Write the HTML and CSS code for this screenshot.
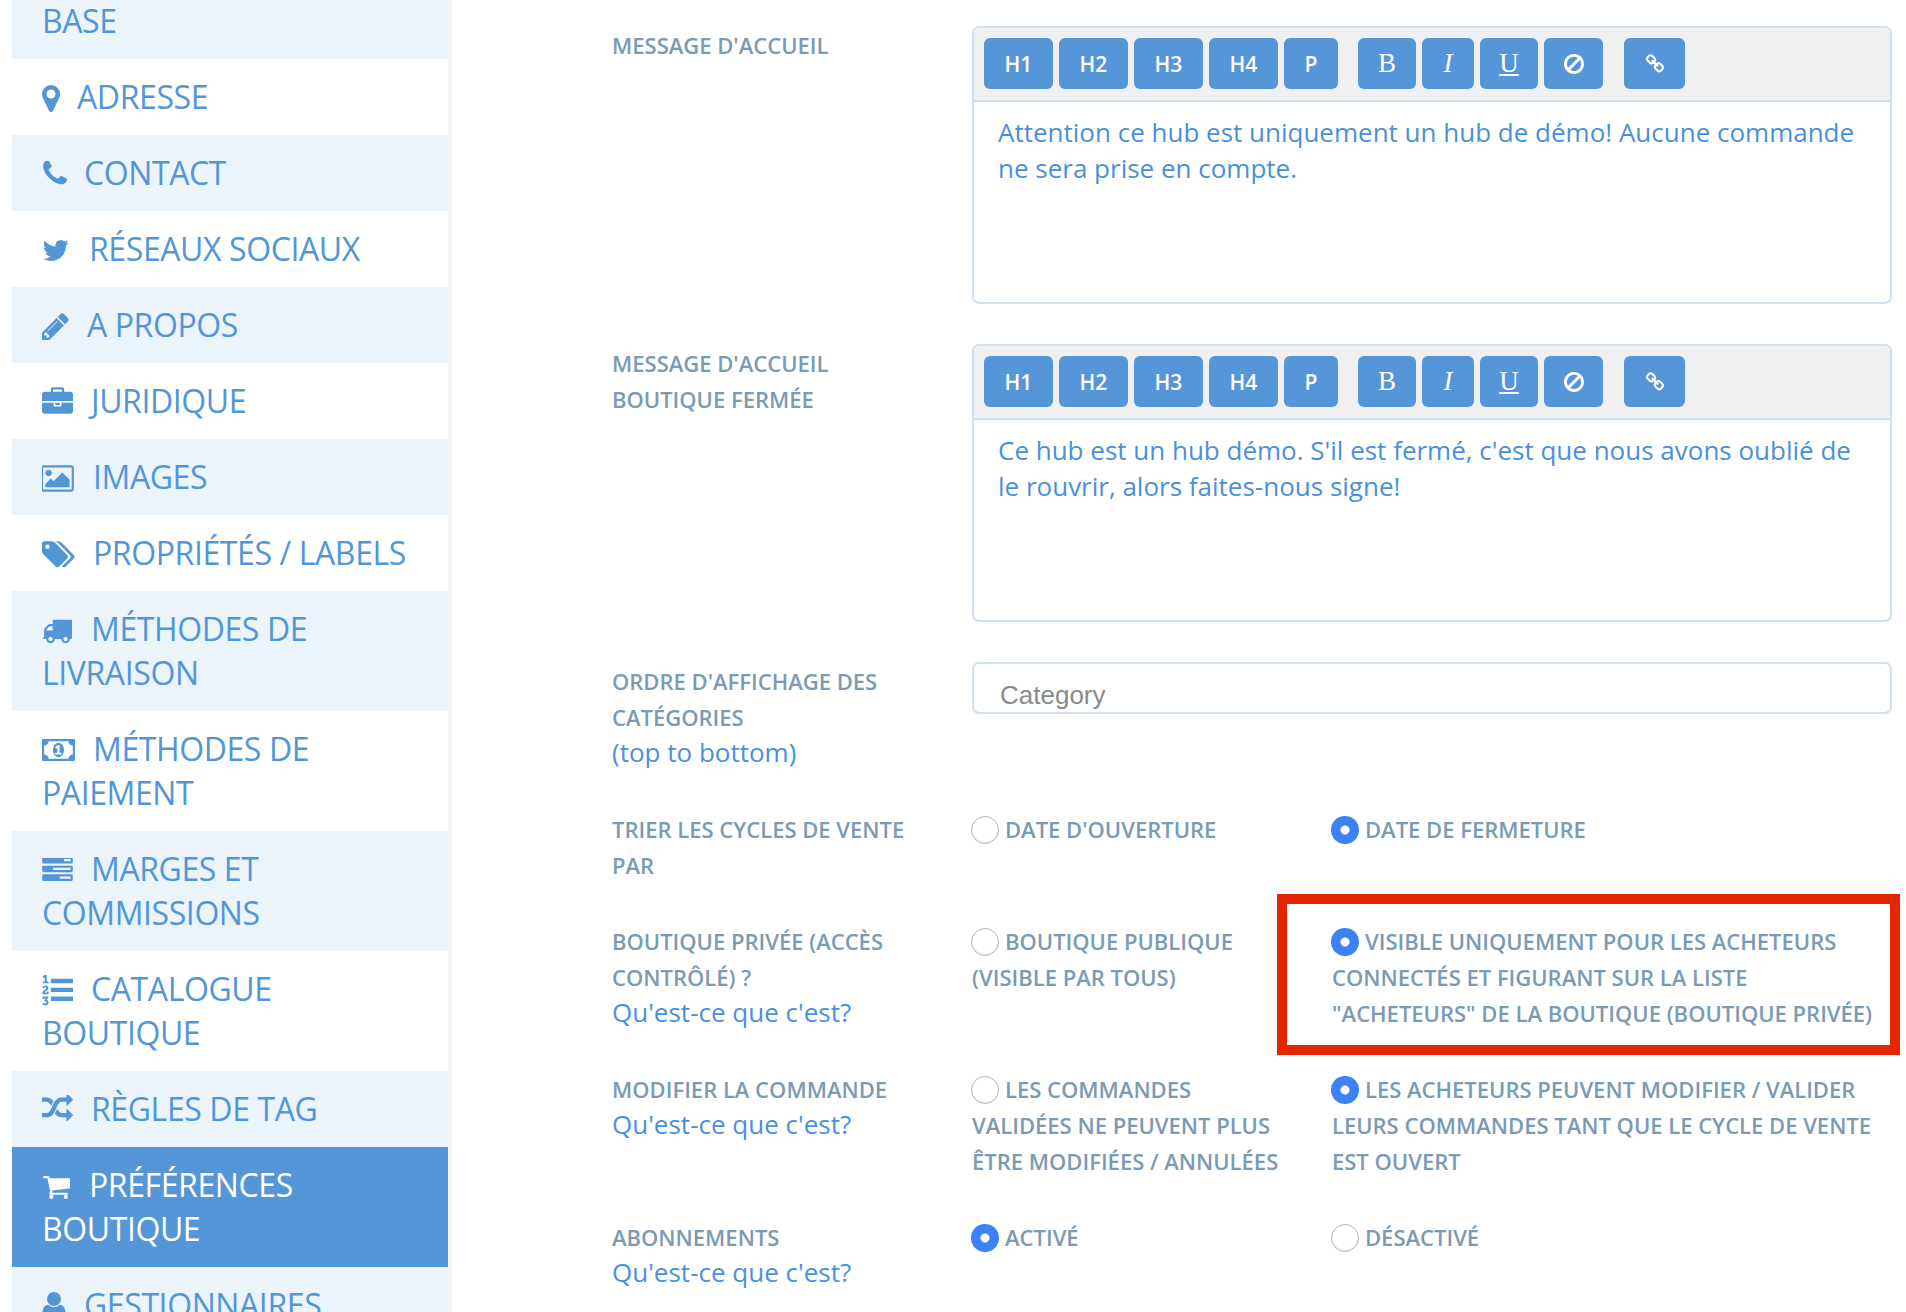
FILE: index.html
```html
<!DOCTYPE html>
<html lang="fr">
<head>
    <meta charset="UTF-8">
    <meta name="viewport" content="width=device-width, initial-scale=1.0">
    <title>Préférences boutique</title>
    <link rel="stylesheet" href="styles.css">
</head>
<body>
    <!-- toolbar icons used by both editors -->
    <svg class="sprites" width="0" height="0">
        <symbol id="ban" viewBox="128 128 1536 1536"><path d="M1440 893q0-161-87-295l-754 753q137 89 297 89 111 0 211.5-43.5t173.5-116.5 116-174.5 43-212.5zm-999 299l755-754q-135-91-300-91-148 0-273 73t-198 199-73 274q0 162 89 299zm1223-299q0 157-61 300t-163.5 246-245 164-298.5 61-298.5-61-245-164-163.5-246-61-300 61-299.5 163.5-245.5 245-164 298.5-61 298.5 61 245 164 163.5 245.5 61 299.5z"/></symbol>
        <symbol id="chain" viewBox="0 128 1792 1536"><path d="M1520 1216q0-40-28-68l-208-208q-28-28-68-28-42 0-72 32 3 3 19 18.5t21.5 21.5 15 19 13 25.5 3.5 27.5q0 40-28 68t-68 28q-15 0-27.5-3.5t-25.5-13-19-15-21.5-21.5-18.5-19q-33 31-33 73 0 40 28 68l206 207q27 27 68 27 40 0 68-26l147-146q28-28 28-67zm-703-705q0-40-28-68l-206-207q-28-28-68-28-39 0-68 27l-147 146q-28 28-28 67 0 40 28 68l208 208q27 27 68 27 42 0 72-31-3-3-19-18.5t-21.5-21.5-15-19-13-25.5-3.5-27.5q0-40 28-68t68-28q15 0 27.5 3.5t25.5 13 19 15 21.5 21.5 18.5 19q33-31 33-73zm895 705q0 120-85 203l-147 146q-83 83-203 83-121 0-204-85l-206-207q-83-83-83-203 0-123 88-209l-88-88q-86 88-208 88-120 0-204-84l-208-208q-84-84-84-204t85-203l147-146q83-83 203-83 121 0 204 85l206 207q83 83 83 203 0 123-88 209l88 88q86-88 208-88 120 0 204 84l208 208q84 84 84 204z"/></symbol>
    </svg>

    <div class="page">
        <!-- side menu -->
        <nav class="sidebar">
            <a class="item odd" href="#">BASE</a>
            <a class="item" href="#"><span class="ico w18 drop3"><svg width="18" height="27" viewBox="0 128 1024 1536"><path d="M768 640q0-106-75-181t-181-75-181 75-75 181 75 181 181 75 181-75 75-181zm256 0q0 109-33 179l-364 774q-16 33-47.5 52t-67.5 19-67.5-19-46.5-52l-365-774q-33-70-33-179 0-212 150-362t362-150 362 150 150 362z"/></svg></span>ADRESSE</a>
            <a class="item odd" href="#"><span class="ico w25 drop1"><svg width="25" height="25" viewBox="128 160 1472 1472"><path d="M1600 1240q0 27-10 70.5t-21 68.5q-21 50-122 106-94 51-186 51-27 0-53-3.5t-57.5-12.5-47-14.5-55.5-20.5-49-18q-98-35-175-83-127-79-264-216t-216-264q-48-77-83-175-3-9-18-49t-20.5-55.5-14.5-47-12.5-57.5-3.5-53q0-92 51-186 56-101 106-122 25-11 68.5-21t70.5-10q14 0 21 3 18 6 53 76 11 19 30 54t35 63.5 31 53.5q3 4 17.5 25t21.5 35.5 7 28.5q0 20-28.5 50t-62 55-62 53-28.5 46q0 9 5 22.5t8.5 20.5 14 24 11.5 19q76 137 174 235t235 174q2 1 19 11.5t24 14 20.5 8.5 22.5 5q18 0 46-28.5t53-62 55-62 50-28.5q14 0 28.5 7t35.5 21.5 25 17.5q25 15 53.5 31t63.5 35 54 30q70 35 76 53 3 7 3 21z"/></svg></span>CONTACT</a>
            <a class="item" href="#"><span class="ico w30 drop1"><svg width="27" height="23" viewBox="64 230 1640 1340"><path d="M1684 408q-67 98-162 167 1 14 1 42 0 130-38 259.5t-115.5 248.5-184.5 210.5-258 146-323 54.5q-271 0-496-145 35 4 78 4 225 0 401-138-105-2-188-64.5t-114-159.5q33 5 61 5 43 0 85-11-112-23-185.5-111.5t-73.5-205.5v-4q68 38 146 41-66-44-105-115t-39-154q0-88 44-163 121 149 294.5 238.5t371.5 99.5q-8-38-8-74 0-134 94.5-228.5t228.5-94.5q140 0 236 102 109-21 205-78-37 115-142 178 100-11 182-49z"/></svg></span>RÉSEAUX SOCIAUX</a>
            <a class="item odd" href="#"><span class="ico w28 drop3"><svg width="27" height="27" viewBox="0 128 1536 1536"><path d="M363 1536l91-91-235-235-91 91v107h128v128h107zm523-928q0-22-22-22-10 0-17 7l-542 542q-7 7-7 17 0 22 22 22 10 0 17-7l542-542q7-7 7-17zm-54-192l416 416-832 832h-416v-416zm683 96q0 53-37 90l-166 166-416-416 166-165q36-38 90-38 53 0 91 38l235 234q37 39 37 91z"/></svg></span>A PROPOS</a>
            <a class="item" href="#"><span class="ico w32 drop1"><svg width="31" height="27" viewBox="0 0 1792 1536"><path d="M640 256h512v-128h-512v128zm1152 640v480q0 66-47 113t-113 47h-1472q-66 0-113-47t-47-113v-480h672v160q0 26 19 45t45 19h320q26 0 45-19t19-45v-160h672zm-768 0v128h-256v-128h256zm768-480v384h-1792v-384q0-66 47-113t113-47h352v-160q0-40 28-68t68-28h576q40 0 68 28t28 68v160h352q66 0 113 47t47 113z"/></svg></span>JURIDIQUE</a>
            <a class="item odd" href="#"><span class="ico w34 drop3"><svg width="33" height="27" viewBox="0 128 1920 1536"><path d="M576 576q0 80-56 136t-136 56-136-56-56-136 56-136 136-56 136 56 56 136zm1024 384v448h-1408v-192l320-320 160 160 512-512zm96-704h-1600q-13 0-22.5 9.5t-9.5 22.5v1216q0 13 9.5 22.5t22.5 9.5h1600q13 0 22.5-9.5t9.5-22.5v-1216q0-13-9.5-22.5t-22.5-9.5zm160 32v1216q0 66-47 113t-113 47h-1600q-66 0-113-47t-47-113v-1216q0-66 47-113t113-47h1600q66 0 113 47t47 113z"/></svg></span>IMAGES</a>
            <a class="item" href="#"><span class="ico w34 drop3"><svg width="33" height="27" viewBox="0 128 1920 1536"><path d="M448 448q0-53-37.5-90.5t-90.5-37.5-90.5 37.5-37.5 90.5 37.5 90.5 90.5 37.5 90.5-37.5 37.5-90.5zm1067 576q0 53-37 90l-491 492q-39 37-91 37-53 0-90-37l-715-716q-38-37-64.5-101t-26.5-117v-416q0-52 38-90t90-38h416q53 0 117 26.5t102 64.5l715 714q37 39 37 91zm384 0q0 53-37 90l-491 492q-39 37-91 37-36 0-59-14t-53-45l470-470q37-37 37-90 0-52-37-91l-715-714q-38-38-102-64.5t-117-26.5h224q53 0 117 26.5t102 64.5l715 714q37 39 37 91z"/></svg></span>PROPRIÉTÉS / LABELS</a>
            <a class="item odd" href="#"><span class="ico w32 drop3"><svg width="30" height="25" viewBox="0 256 1792 1408"><path d="M640 1408q0-52-38-90t-90-38-90 38-38 90 38 90 90 38 90-38 38-90zm-384-512h384v-256h-158q-13 0-22 9l-195 195q-9 9-9 22v30zm1280 512q0-52-38-90t-90-38-90 38-38 90 38 90 90 38 90-38 38-90zm256-1088v1024q0 15-4 26.5t-13.5 18.5-16.5 11.5-23.5 6-22.5 2-25.5 0-22.5-.5q0 106-75 181t-181 75-181-75-75-181h-384q0 106-75 181t-181 75-181-75-75-181h-64q-3 0-22.5.5t-25.5 0-22.5-2-23.5-6-16.5-11.5-13.5-18.5-4-26.5q0-26 19-45t45-19v-320q0-8-.5-35t0-38 2.5-34.5 6.5-37 14-30.5 22.5-30l198-198q19-19 50.5-32t58.5-13h160v-192q0-26 19-45t45-19h1024q26 0 45 19t19 45z"/></svg></span>MÉTHODES DE LIVRAISON</a>
            <a class="item" href="#"><span class="ico w34"><svg width="33" height="22" viewBox="0 256 1920 1280"><path d="M768 1152h384v-96h-128v-448h-114l-148 137 77 80q42-37 55-57h2v288h-128v96zm512-256q0 70-21 142t-59.5 134-101.5 101-138 39-138-39-101.5-101-59.5-134-21-142 21-142 59.5-134 101.5-101 138-39 138 39 101.5 101 59.5 134 21 142zm512 256v-512q-106 0-181-75t-75-181h-1152q0 106-75 181t-181 75v512q106 0 181 75t75 181h1152q0-106 75-181t181-75zm128-832v1152q0 26-19 45t-45 19h-1792q-26 0-45-19t-19-45v-1152q0-26 19-45t45-19h1792q26 0 45 19t19 45z"/></svg></span>MÉTHODES DE PAIEMENT</a>
            <a class="item odd" href="#"><span class="ico w32 drop1"><svg width="31" height="24" viewBox="0 192 1792 1408"><path d="M1024 1408h640v-128h-640v128zm-384-512h1024v-128h-1024v128zm640-512h384v-128h-384v128zm512 832v256q0 26-19 45t-45 19h-1664q-26 0-45-19t-19-45v-256q0-26 19-45t45-19h1664q26 0 45 19t19 45zm0-512v256q0 26-19 45t-45 19h-1664q-26 0-45-19t-19-45v-256q0-26 19-45t45-19h1664q26 0 45 19t19 45zm0-512v256q0 26-19 45t-45 19h-1664q-26 0-45-19t-19-45v-256q0-26 19-45t45-19h1664q26 0 45 19t19 45z"/></svg></span>MARGES ET COMMISSIONS</a>
            <a class="item" href="#"><span class="ico w32 drop6"><svg width="31" height="32" viewBox="0 128 1792 1664"><path d="M381 1620q0 80-54.5 126t-135.5 46q-106 0-172-66l57-88q49 45 106 45 29 0 50.5-14.5t21.5-42.5q0-64-105-56l-26-56q8-10 32.5-43.5t42.5-54 37-38.5v-1q-16 0-48.5 1t-48.5 1v53h-106v-152h333v88l-95 115q51 12 81 49t30 88zm2-627v159h-362q-6-36-6-54 0-51 23.5-93t56.5-68 66-47.5 56.5-43.5 23.5-45q0-25-14.5-38.5t-39.5-13.5q-46 0-81 58l-85-59q24-51 71.5-79.5t105.5-28.5q73 0 123 41.5t50 112.5q0 50-34 91.5t-75 64.5-75.5 50.5-35.5 52.5h127v-60h105zm1409 319v192q0 13-9.5 22.5t-22.5 9.5h-1216q-13 0-22.5-9.5t-9.5-22.5v-192q0-14 9-23t23-9h1216q13 0 22.5 9.5t9.5 22.5zm-1408-899v99h-335v-99h107q0-41 .5-122t.5-121v-12h-2q-8 17-50 54l-71-76 136-127h106v404h108zm1408 387v192q0 13-9.5 22.5t-22.5 9.5h-1216q-13 0-22.5-9.5t-9.5-22.5v-192q0-14 9-23t23-9h1216q13 0 22.5 9.5t9.5 22.5zm0-512v192q0 13-9.5 22.5t-22.5 9.5h-1216q-13 0-22.5-9.5t-9.5-22.5v-192q0-13 9.5-22.5t22.5-9.5h1216q13 0 22.5 9.5t9.5 22.5z"/></svg></span>CATALOGUE BOUTIQUE</a>
            <a class="item odd" href="#"><span class="ico w32 drop1"><svg width="31" height="27" viewBox="0 128 1792 1536"><path d="M666 481q-60 92-137 273-22-45-37-72.5t-40.5-63.5-51-56.5-63-35-81.5-14.5h-224q-14 0-23-9t-9-23v-192q0-14 9-23t23-9h224q250 0 410 225zm1126 799q0 14-9 23l-320 320q-9 9-23 9-13 0-22.5-9.5t-9.5-22.5v-192q-32 0-85 .5t-81 1-73-1-71-5-64-10.5-63-18.5-58-28.5-59-40-55-53.5-56-69.5q59-93 136-273 22 45 37 72.5t40.5 63.5 51 56.5 63 35 81.5 14.5h256v-192q0-14 9-23t23-9q12 0 24 10l319 319q9 9 9 23zm0-896q0 14-9 23l-320 320q-9 9-23 9-13 0-22.5-9.5t-9.5-22.5v-192h-256q-48 0-87 15t-69 45-51 61.5-45 77.5q-32 62-78 171-29 66-49.5 111t-54 105-64 100-74 83-90 68.5-106.5 42-128 16.5h-224q-14 0-23-9t-9-23v-192q0-14 9-23t23-9h224q48 0 87-15t69-45 51-61.5 45-77.5q32-62 78-171 29-66 49.5-111t54-105 64-100 74-83 90-68.5 106.5-42 128-16.5h256v-192q0-14 9-23t23-9q12 0 24 10l319 319q9 9 9 23z"/></svg></span>RÈGLES DE TAG</a>
            <a class="item active" href="#"><span class="ico w30 drop3"><svg width="29" height="25" viewBox="0 256 1792 1408"><path d="M704 1536q0 52-38 90t-90 38-90-38-38-90 38-90 90-38 90 38 38 90zm896 0q0 52-38 90t-90 38-90-38-38-90 38-90 90-38 90 38 38 90zm128-1088v512q0 24-16.5 42.5t-40.5 21.5l-1044 122q13 60 13 70 0 16-24 64h920q26 0 45 19t19 45-19 45-45 19h-1024q-26 0-45-19t-19-45q0-11 8-31.5t16-36 21.5-40 15.5-29.5l-177-823h-204q-26 0-45-19t-19-45 19-45 45-19h256q16 0 28.5 6.5t19.5 15.5 13 24.5 8 26 5.5 29.5 4.5 26h1201q26 0 45 19t19 45z"/></svg></span>PRÉFÉRENCES BOUTIQUE</a>
            <a class="item odd" href="#"><span class="ico w25 drop3"><svg width="24" height="28" viewBox="0 128 1280 1536"><path d="M1280 1399q0 109-62.5 187t-150.5 78h-854q-88 0-150.5-78t-62.5-187q0-85 8.5-160.5t31.5-152 58.5-131 94-89 134.5-34.5q131 128 313 128t313-128q76 0 134.5 34.5t94 89 58.5 131 31.5 152 8.5 160.5zm-256-887q0 159-112.5 271.5t-271.5 112.5-271.5-112.5-112.5-271.5 112.5-271.5 271.5-112.5 271.5 112.5 112.5 271.5z"/></svg></span>GESTIONNAIRES</a>
        </nav>

        <!-- settings form -->
        <main class="form">
            <div class="row">
                <div class="label">MESSAGE D'ACCUEIL</div>
                <div class="editor">
                    <div class="toolbar">
                        <div class="group">
                            <button class="btn">H1</button><button class="btn">H2</button><button class="btn">H3</button><button class="btn">H4</button><button class="btn p">P</button>
                        </div>
                        <div class="group">
                            <button class="btn serif b">B</button><button class="btn serif i"><i>I</i></button><button class="btn serif b"><u>U</u></button><button class="btn ban"><svg width="20" height="20"><use href="#ban"/></svg></button>
                        </div>
                        <button class="btn link"><svg width="20" height="20"><use href="#chain"/></svg></button>
                    </div>
                    <div class="text">Attention ce hub est uniquement un hub de démo! Aucune commande ne sera prise en compte.</div>
                </div>
            </div>

            <div class="row">
                <div class="label">MESSAGE D'ACCUEIL BOUTIQUE FERMÉE</div>
                <div class="editor">
                    <div class="toolbar">
                        <div class="group">
                            <button class="btn">H1</button><button class="btn">H2</button><button class="btn">H3</button><button class="btn">H4</button><button class="btn p">P</button>
                        </div>
                        <div class="group">
                            <button class="btn serif b">B</button><button class="btn serif i"><i>I</i></button><button class="btn serif b"><u>U</u></button><button class="btn ban"><svg width="20" height="20"><use href="#ban"/></svg></button>
                        </div>
                        <button class="btn link"><svg width="20" height="20"><use href="#chain"/></svg></button>
                    </div>
                    <div class="text">Ce hub est un hub démo. S'il est fermé, c'est que nous avons oublié de le rouvrir, alors faites-nous signe!</div>
                </div>
            </div>

            <div class="row">
                <div class="label">ORDRE D'AFFICHAGE DES CATÉGORIES<a class="help" href="#">(top to bottom)</a></div>
                <input class="field" type="text" placeholder="Category">
            </div>

            <div class="row tight">
                <div class="label">TRIER LES CYCLES DE VENTE PAR</div>
                <div class="options">
                    <label class="opt first"><input type="radio" name="sort">DATE D'OUVERTURE</label>
                    <label class="opt"><input type="radio" name="sort" checked>DATE DE FERMETURE</label>
                </div>
            </div>

            <div class="row">
                <div class="label">BOUTIQUE PRIVÉE (ACCÈS CONTRÔLÉ) ?<a class="help" href="#">Qu'est-ce que c'est?</a></div>
                <div class="options">
                    <label class="opt first"><input type="radio" name="shop">BOUTIQUE PUBLIQUE (VISIBLE PAR TOUS)</label>
                    <label class="opt"><input type="radio" name="shop" checked>VISIBLE UNIQUEMENT POUR LES ACHETEURS CONNECTÉS ET FIGURANT SUR LA LISTE "ACHETEURS" DE LA BOUTIQUE (BOUTIQUE PRIVÉE)</label>
                </div>
            </div>

            <div class="row">
                <div class="label">MODIFIER LA COMMANDE<a class="help" href="#">Qu'est-ce que c'est?</a></div>
                <div class="options">
                    <label class="opt first"><input type="radio" name="edit">LES COMMANDES VALIDÉES NE PEUVENT PLUS ÊTRE MODIFIÉES / ANNULÉES</label>
                    <label class="opt"><input type="radio" name="edit" checked>LES ACHETEURS PEUVENT MODIFIER / VALIDER LEURS COMMANDES TANT QUE LE CYCLE DE VENTE EST OUVERT</label>
                </div>
            </div>

            <div class="row">
                <div class="label">ABONNEMENTS<a class="help" href="#">Qu'est-ce que c'est?</a></div>
                <div class="options">
                    <label class="opt first"><input type="radio" name="subs" checked>ACTIVÉ</label>
                    <label class="opt"><input type="radio" name="subs">DÉSACTIVÉ</label>
                </div>
            </div>
        </main>

        <!-- red highlight drawn over the private shop option -->
        <div class="highlight"></div>
    </div>
</body>
</html>
```

FILE: styles.css
```css
html, body {
    margin: 0;
    height: 100%;
    overflow: hidden;
    background-color: #fff;
}

body {
    font-family: "Open Sans", sans-serif;
}

.sprites {
    position: absolute;
}

.page {
    position: relative;
    display: flex;
    height: 1312px;
    overflow: hidden;
}

/* side menu */
.sidebar {
    flex: none;
    width: 436px;
    margin: -17px 0 0 12px;
    padding-right: 4px;
    background-color: #f5f5f5;
}

.item {
    display: block;
    padding: 16px 20px 16px 30px;
    background-color: #fff;
    color: #5296d8;
    font-size: 32px;
    line-height: 44px;
    letter-spacing: -0.4px;
    text-decoration: none;
}

.item.odd {
    background-color: #ebf3fb;
}

.item.active {
    background-color: #5596d8;
    color: #fff;
}

.ico {
    display: inline-block;
    margin-right: 17px;
}

.ico svg {
    display: block;
    fill: currentColor;
}

.w18 { width: 18px; }
.w25 { width: 25px; }
.w28 { width: 28px; }
.w30 { width: 30px; }
.w32 { width: 32px; }
.w34 { width: 34px; }

/* how far an icon hangs below the text baseline */
.drop1 { vertical-align: -1px; }
.drop3 { vertical-align: -3px; }
.drop6 { vertical-align: -6px; }

/* form */
.form {
    flex: none;
    width: 1294px;
    margin-left: 160px;
    padding-top: 26px;
}

.row {
    display: grid;
    grid-template-columns: 360px 920px;
    margin-bottom: 40px;
}

.row.tight {
    margin-bottom: 39px;
}

.label {
    padding: 1px 41px 0 0;
    color: #7b9ab4;
    font-size: 22px;
    font-weight: 600;
    line-height: 36px;
}

.help {
    display: block;
    margin-top: -1px;
    color: #4a90e2;
    font-size: 26px;
    font-weight: 400;
    text-decoration: none;
}

.editor {
    height: 278px;
    border: 2px solid #d0e0ef;
    border-radius: 7px;
    box-sizing: border-box;
}

.toolbar {
    display: flex;
    gap: 20px;
    height: 74px;
    padding: 10px;
    box-sizing: border-box;
    border-bottom: 2px solid #d0e0ef;
    border-radius: 5px 5px 0 0;
    background-color: #f0f0f0;
}

.group {
    display: flex;
    gap: 6px;
}

.btn {
    display: flex;
    align-items: center;
    justify-content: center;
    width: 69px;
    height: 51px;
    padding: 0;
    border: none;
    border-radius: 6px;
    background-color: #5596d8;
    color: #fff;
    font-family: "Open Sans", sans-serif;
    font-size: 21px;
    font-weight: 600;
    cursor: pointer;
}

.btn svg {
    fill: #fff;
}

.btn.p { width: 54px; }
.btn.b { width: 58px; }
.btn.i { width: 52px; }
.btn.ban { width: 59px; }
.btn.link {
    width: 61px;
    margin-left: 1px;
}

.serif {
    font-family: "Liberation Serif", serif;
    font-size: 27px;
    font-weight: 400;
}

.text {
    padding: 12px 24px;
    color: #4a90d9;
    font-size: 26px;
    line-height: 36px;
}

.field {
    height: 52px;
    padding: 14px 26px 0;
    border: 2px solid #d0e0ef;
    border-radius: 7px;
    box-sizing: border-box;
    font-family: "Liberation Sans", sans-serif;
    font-size: 26px;
    outline: none;
}

.field::placeholder {
    color: #8a8a8a;
    opacity: 1;
}

.options {
    display: grid;
    grid-template-columns: 360px 1fr;
}

.opt {
    padding: 1px 12px 0 0;
    margin-bottom: -1px;
    color: #7b9ab4;
    font-size: 22px;
    font-weight: 600;
    line-height: 36px;
}

.opt.first {
    padding-right: 43px;
}

.opt input {
    appearance: none;
    width: 28px;
    height: 28px;
    margin: 0 6px 0 -1px;
    border: 1px solid #b4b4b4;
    border-radius: 50%;
    box-sizing: border-box;
    background-color: #fff;
    box-shadow: inset 0 -1px 1px rgba(0, 0, 0, 0.08);
    vertical-align: -6px;
}

.opt input:checked {
    border: none;
    background: radial-gradient(circle, #fff 0, #fff 4px, #3b82f6 5px);
    box-shadow: none;
}

.highlight {
    position: absolute;
    left: 1277px;
    top: 894px;
    width: 623px;
    height: 161px;
    border: 10px solid #e52400;
    box-sizing: border-box;
}
```
